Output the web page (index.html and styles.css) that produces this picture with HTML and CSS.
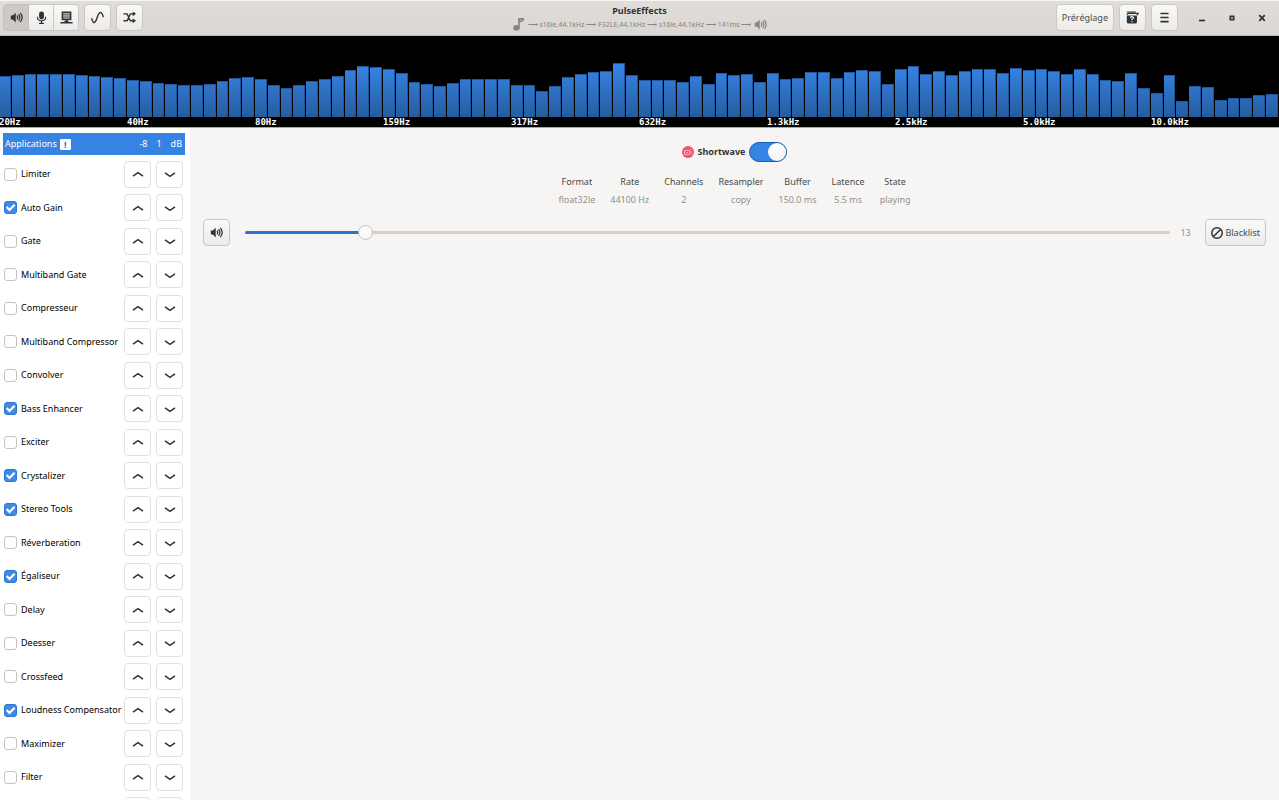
FILE: index.html
```html
<!DOCTYPE html>
<html lang="fr">
<head>
<meta charset="utf-8">
<title>PulseEffects</title>
<link rel="stylesheet" href="styles.css">
</head>
<body>
<svg class="symbols" aria-hidden="true">
  <symbol id="speaker" viewBox="0 0 16 16"><path d="M1 5.5h2.5L7 2v12L3.500 10.500H1z" fill="currentColor"/><path d="M8.600 5.800q1.800 2.200 0 4.400M10.600 4q3.200 4 0 8M12.700 2.400q4.600 5.600 0 11.200" fill="none" stroke="currentColor" stroke-width="1.500"/></symbol>
  <symbol id="up" viewBox="0 0 12 12"><path d="M1 8.200 6 4.700l5 3.500" fill="none" stroke="currentColor" stroke-width="1.500"/></symbol>
  <symbol id="down" viewBox="0 0 12 12"><path d="M1 4.800l5 3.500 5-3.500" fill="none" stroke="currentColor" stroke-width="1.500"/></symbol>
</svg>
<header class="headerbar">
  <div class="tools">
    <div class="linked">
      <button class="button pressed" aria-label="Sortie"><svg class="icon"><use href="#speaker"/></svg></button>
      <button class="button" aria-label="Microphone"><svg class="icon" viewBox="0 0 16 16"><rect x="5" y="0.500" width="6" height="10" rx="3" fill="currentColor"/><path d="M3 7v1q0 4 5 4t5-4V7M8 12v3.500M5 15.200h6" fill="none" stroke="currentColor" stroke-width="1.400"/></svg></button>
      <button class="button" aria-label="Tests"><svg class="icon" viewBox="0 0 16 16"><path d="M3 1.500h10v9H3zM8 11v3M0.500 14.500h15" fill="#aeb0b0" stroke="currentColor" stroke-width="2"/><path d="M4 4.500h8M4 7.500h8" stroke="currentColor" stroke-width="0.700"/><path d="M5.500 13h5" stroke="currentColor" stroke-width="2"/></svg></button>
    </div>
    <button class="button" aria-label="Spectre"><svg class="icon" viewBox="0 0 16 16"><path d="M1 9.500C2 14 3.500 15 5 13.500C8 10.500 7.500 4 10.500 2.200C12.500 1 14 3 15 7" fill="none" stroke="currentColor" stroke-width="1.700" stroke-linecap="round"/></svg></button>
    <button class="button" aria-label="Calibrage"><svg class="icon" viewBox="0 0 16 16"><path d="M0.500 3.500h4.500l4 8.500h4M0.500 12h4.500l4-8.500h4" fill="none" stroke="currentColor" stroke-width="1.700"/><path d="M12 .5l4 3-4 3zM12 9l4 3-4 3z" fill="currentColor"/></svg></button>
  </div>
  <div class="titles">
    <h1 class="title">PulseEffects</h1>
    <p class="subtitle"><svg class="icon" viewBox="0 0 16 16"><ellipse cx="5.500" cy="12" rx="4" ry="3.500" fill="currentColor"/><path d="M8.500 12V1h5.500q-.5 3-5 3.500" fill="none" stroke="currentColor" stroke-width="2"/></svg><span>⟶ s16le,44.1kHz ⟶ F32LE,44.1kHz ⟶ s16le,44.1kHz ⟶ 141ms ⟶</span><svg class="icon"><use href="#speaker"/></svg></p>
  </div>
  <div class="tools end">
    <button class="button text">Préréglage</button>
    <button class="button" aria-label="Aide"><svg class="icon" viewBox="0 0 16 16"><path d="M1 1.200h11M1 4.500q1-1.500 3-1.500h11l-1.500 2" fill="none" stroke="currentColor" stroke-width="1.400"/><path d="M1 5.500h12.500v8q0 2-2 2h-8.500q-2 0-2-2z" fill="currentColor"/><path d="M5.500 8.500q0-1.500 1.800-1.500t1.800 1.500q0 1-1.800 1.800v.7M7.300 12.500v1.300" fill="none" stroke="#fff" stroke-width="1.400"/></svg></button>
    <button class="button" aria-label="Menu"><svg class="icon" viewBox="0 0 16 16"><path d="M3 3h10M3 8h10M3 13h10" stroke="currentColor" stroke-width="2"/></svg></button>
    <div class="window-controls">
      <button aria-label="Réduire"><svg viewBox="0 0 12 12"><path d="M3 8.500h6" stroke="currentColor" stroke-width="1.700"/></svg></button>
      <button aria-label="Agrandir"><svg viewBox="0 0 12 12"><path d="M4.300 4.300h3.400v3.400H4.300z" fill="none" stroke="currentColor" stroke-width="1.700"/></svg></button>
      <button aria-label="Fermer"><svg viewBox="0 0 12 12"><path d="M3.200 3.200l5.600 5.600M8.800 3.200L3.200 8.800" stroke="currentColor" stroke-width="1.800"/></svg></button>
    </div>
  </div>
</header>
<section class="spectrum">
  <div class="bars" id="bars"></div>
  <div class="frequencies"><span>20Hz</span><span>40Hz</span><span>80Hz</span><span>159Hz</span><span>317Hz</span><span>632Hz</span><span>1.3kHz</span><span>2.5kHz</span><span>5.0kHz</span><span>10.0kHz</span></div>
</section>
<div class="content">
  <aside class="sidebar">
    <div class="selected"><span>Applications</span><span class="alert">!</span><span class="levels"><span>-8</span><span>1</span><span>dB</span></span></div>
    <ul class="plugins" id="plugins"></ul>
  </aside>
  <main class="main">
    <div class="app">
      <svg class="app-icon" viewBox="0 0 12 12"><circle cx="6" cy="6" r="6" fill="#f6506f"/><path d="M2.500 4.500h5v4h-5zM7.500 4.500l1.500-1.500M9 5v3.500M4 6.500h2" fill="none" stroke="#fbb3c0" stroke-width="0.900"/></svg>
      <label for="enabled">Shortwave</label>
      <input class="switch" type="checkbox" role="switch" id="enabled" checked>
    </div>
    <table class="details">
      <thead><tr><th>Format</th><th>Rate</th><th>Channels</th><th>Resampler</th><th>Buffer</th><th>Latence</th><th>State</th></tr></thead>
      <tbody><tr><td>float32le</td><td>44100 Hz</td><td>2</td><td>copy</td><td>150.0 ms</td><td>5.5 ms</td><td>playing</td></tr></tbody>
    </table>
    <div class="volume">
      <button class="button" aria-label="Muet"><svg class="icon"><use href="#speaker"/></svg></button>
      <input class="slider" type="range" min="0" max="100" value="13" aria-label="Volume">
      <output class="value">13</output>
      <button class="button text"><svg class="icon ban" viewBox="0 0 16 16"><path d="M13 3L3 13M15 8A7 7 0 1 1 1 8A7 7 0 1 1 15 8z" fill="none" stroke="currentColor" stroke-width="2"/></svg>Blacklist</button>
    </div>
  </main>
</div>
<script src="app.js"></script>
</body>
</html>
```
FILE: styles.css
```css
* { box-sizing: border-box; }
body {
  margin: 0;
  height: 100vh;
  display: flex;
  flex-direction: column;
  overflow: hidden;
  background: #f6f5f4;
  color: #2e3436;
  font: 9px/14px "Noto Sans", sans-serif;
}
button { font: inherit; color: inherit; padding: 0; }
.symbols { position: absolute; width: 0; height: 0; }
.icon { width: 13px; height: 13px; flex: none; }

.headerbar {
  flex: none;
  height: 36px;
  display: grid;
  grid-template-columns: 1fr auto 1fr;
  align-items: center;
  padding: 0 3px 1px;
  background: linear-gradient(#e1deda, #dad6d2);
  border-top: 1px solid #f7f6f5;
  border-bottom: 1px solid #bfb8b1;
}
.tools { display: flex; align-items: center; gap: 5px; }
.end { justify-content: flex-end; }
.button {
  width: 27px;
  height: 27px;
  flex: none;
  display: flex;
  align-items: center;
  justify-content: center;
  gap: 2px;
  border: 1px solid #cdc7c2;
  border-radius: 4px;
  background: linear-gradient(#f9f9f8, #edebe9);
}
.button.text { width: auto; padding: 0 5px; color: #464b4d; }
.linked { display: flex; }
.linked .button { border-radius: 0; border-left-width: 0; width: 25px; }
.linked .button:first-child { border-left-width: 1px; border-radius: 4px 0 0 4px; width: 26px; }
.linked .button:last-child { border-radius: 0 4px 4px 0; }
.linked .pressed { background: #cfc9c4; border-color: #c6bfb9; }
.titles { text-align: center; }
.title { margin: 0; font-size: 9px; line-height: 14px; font-weight: bold; }
.subtitle {
  margin: 0;
  display: flex;
  align-items: center;
  justify-content: center;
  gap: 3px;
  font-size: 7px;
  line-height: 12px;
  color: #848585;
}
.window-controls { display: flex; gap: 18px; padding: 0 8px 0 13px; }
.window-controls button { width: 12px; height: 12px; border: 0; background: none; }
.window-controls svg { display: block; width: 12px; height: 12px; }

.spectrum { flex: none; height: 92px; display: flex; flex-direction: column; background: #000; border-bottom: 1px solid #aaa6a2; overflow: hidden; }
.bars { flex: 1; display: flex; align-items: flex-end; margin: 0 1px 0 -1px; }
.bar {
  flex: 1 1 0;
  border: 1px solid #1f5596;
  border-width: 1px 1px 0 0;
  border-top-color: #23579a;
  margin-right: 1px;
  background: linear-gradient(#3584e4, #265c9f) bottom / 100% 51px no-repeat #3584e4;
}
.frequencies {
  display: grid;
  grid-template-columns: repeat(10, 1fr);
  margin-left: -1px;
  color: #fff;
  font: bold 9px/10px "DejaVu Sans Mono", monospace;
}

.content { flex: 1; min-height: 0; display: flex; }
.sidebar { flex: none; width: 190px; padding: 5px 5px 0 3px; background: #fff; overflow: hidden; }
.selected { height: 22px; margin-bottom: 2px; padding: 0 3px 0 2px; display: flex; align-items: center; gap: 3px; background: #3584e4; color: #fff; }
.alert { width: 11px; height: 11px; border-radius: 1px; background: #fff; color: #2a6fc4; font-weight: bold; line-height: 11px; text-align: center; }
.levels { margin-left: auto; display: flex; gap: 9px; }
.plugins { list-style: none; margin: 0; padding: 0 2px 0 0; }
.plugin { height: 33px; display: flex; align-items: center; color: #000; }
.plugin:nth-child(odd) { height: 34px; }
.plugin label { flex: 1; display: flex; align-items: center; gap: 4px; white-space: nowrap; }
.check { appearance: none; width: 13px; height: 13px; margin: 0 0 0 1px; border: 1px solid #c9c2bc; border-radius: 3px; background: #fff; }
.check:checked {
  border-color: #2b76d4;
  background: #3f8ae5 url("data:image/svg+xml,%3Csvg xmlns='http://www.w3.org/2000/svg' viewBox='0 0 10 10'%3E%3Cpath d='M1.500 4.500l2.600 2.700L8.700 2.500' fill='none' stroke='white' stroke-width='2'/%3E%3C/svg%3E");
}
.move { flex: none; width: 27px; height: 27px; display: flex; align-items: center; justify-content: center; border: 1px solid #e2e0de; border-radius: 4px; background: #fff; color: #2e3436; }
.move + .move { margin-left: 5px; }
.move svg { width: 12px; height: 12px; }

.main { flex: 1; padding: 14px 13px; }
.app { display: flex; align-items: center; justify-content: center; gap: 4px; font-weight: bold; }
.app-icon { width: 12px; height: 12px; }
.switch { appearance: none; width: 38px; height: 20px; margin: 0; padding: 0; border: 1px solid #185fb4; border-radius: 10px; background: #3584e4; display: flex; justify-content: flex-end; }
.switch::before { content: ""; width: 18px; height: 18px; border-radius: 9px; background: linear-gradient(#fff, #f5f5f5); }
.details { margin: 13px auto 12px; border-collapse: separate; border-spacing: 15px 0; text-align: center; }
.details th { padding: 0 0 4px; font-weight: normal; color: #464b4d; }
.details td { padding: 0; color: #8f9192; }
.volume { display: flex; align-items: center; }
.slider { appearance: none; flex: 1; min-width: 0; height: 3px; margin: 0 10px 0 15px; border-radius: 2px; background: linear-gradient(90deg, #2a72cf 13%, #d5d0cc 13%); }
.slider::-webkit-slider-runnable-track { margin: 0 -7px; }
.slider::-webkit-slider-thumb { appearance: none; width: 15px; height: 15px; border: 1px solid #c5beb8; border-radius: 8px; background: linear-gradient(#fff, #f7f7f6); }
.value { width: 25px; color: #8f9192; }
.ban { width: 12px; height: 12px; color: #2e3436; }
```
FILE: app.js
```javascript
const levels = [
  41, 42, 43, 43, 43, 43, 42, 41, 40, 39, 37, 36, 34, 33, 32, 32, 33, 36, 39, 40,
  38, 32, 29, 32, 36, 38, 41, 47, 51, 50, 48, 44, 35, 33, 31, 34, 38, 38, 38, 38,
  32, 32, 26, 31, 40, 43, 45, 46, 54, 42, 37, 37, 37, 35, 41, 33, 44, 42, 43, 35,
  44, 38, 39, 45, 45, 39, 45, 47, 46, 33, 48, 51, 43, 46, 42, 46, 48, 48, 44, 49,
  47, 48, 46, 43, 48, 43, 37, 36, 44, 29, 24, 42, 16, 31, 30, 17, 19, 19, 22, 23
];
document.getElementById("bars").innerHTML = levels
  .map((level) => `<div class="bar" style="height:${level}px"></div>`)
  .join("");

const plugins = [
  ["Limiter"], ["Auto Gain", true], ["Gate"], ["Multiband Gate"], ["Compresseur"],
  ["Multiband Compressor"], ["Convolver"], ["Bass Enhancer", true], ["Exciter"],
  ["Crystalizer", true], ["Stereo Tools", true], ["Réverberation"], ["Égaliseur", true],
  ["Delay"], ["Deesser"], ["Crossfeed"], ["Loudness Compensator", true], ["Maximizer"],
  ["Filter"], [""]
];
document.getElementById("plugins").innerHTML = plugins
  .map(([name, on]) => `<li class="plugin">
    <label><input class="check" type="checkbox"${on ? " checked" : ""}>${name}</label>
    <button class="move" aria-label="Monter ${name}"><svg><use href="#up"/></svg></button>
    <button class="move" aria-label="Descendre ${name}"><svg><use href="#down"/></svg></button>
  </li>`)
  .join("");
```
